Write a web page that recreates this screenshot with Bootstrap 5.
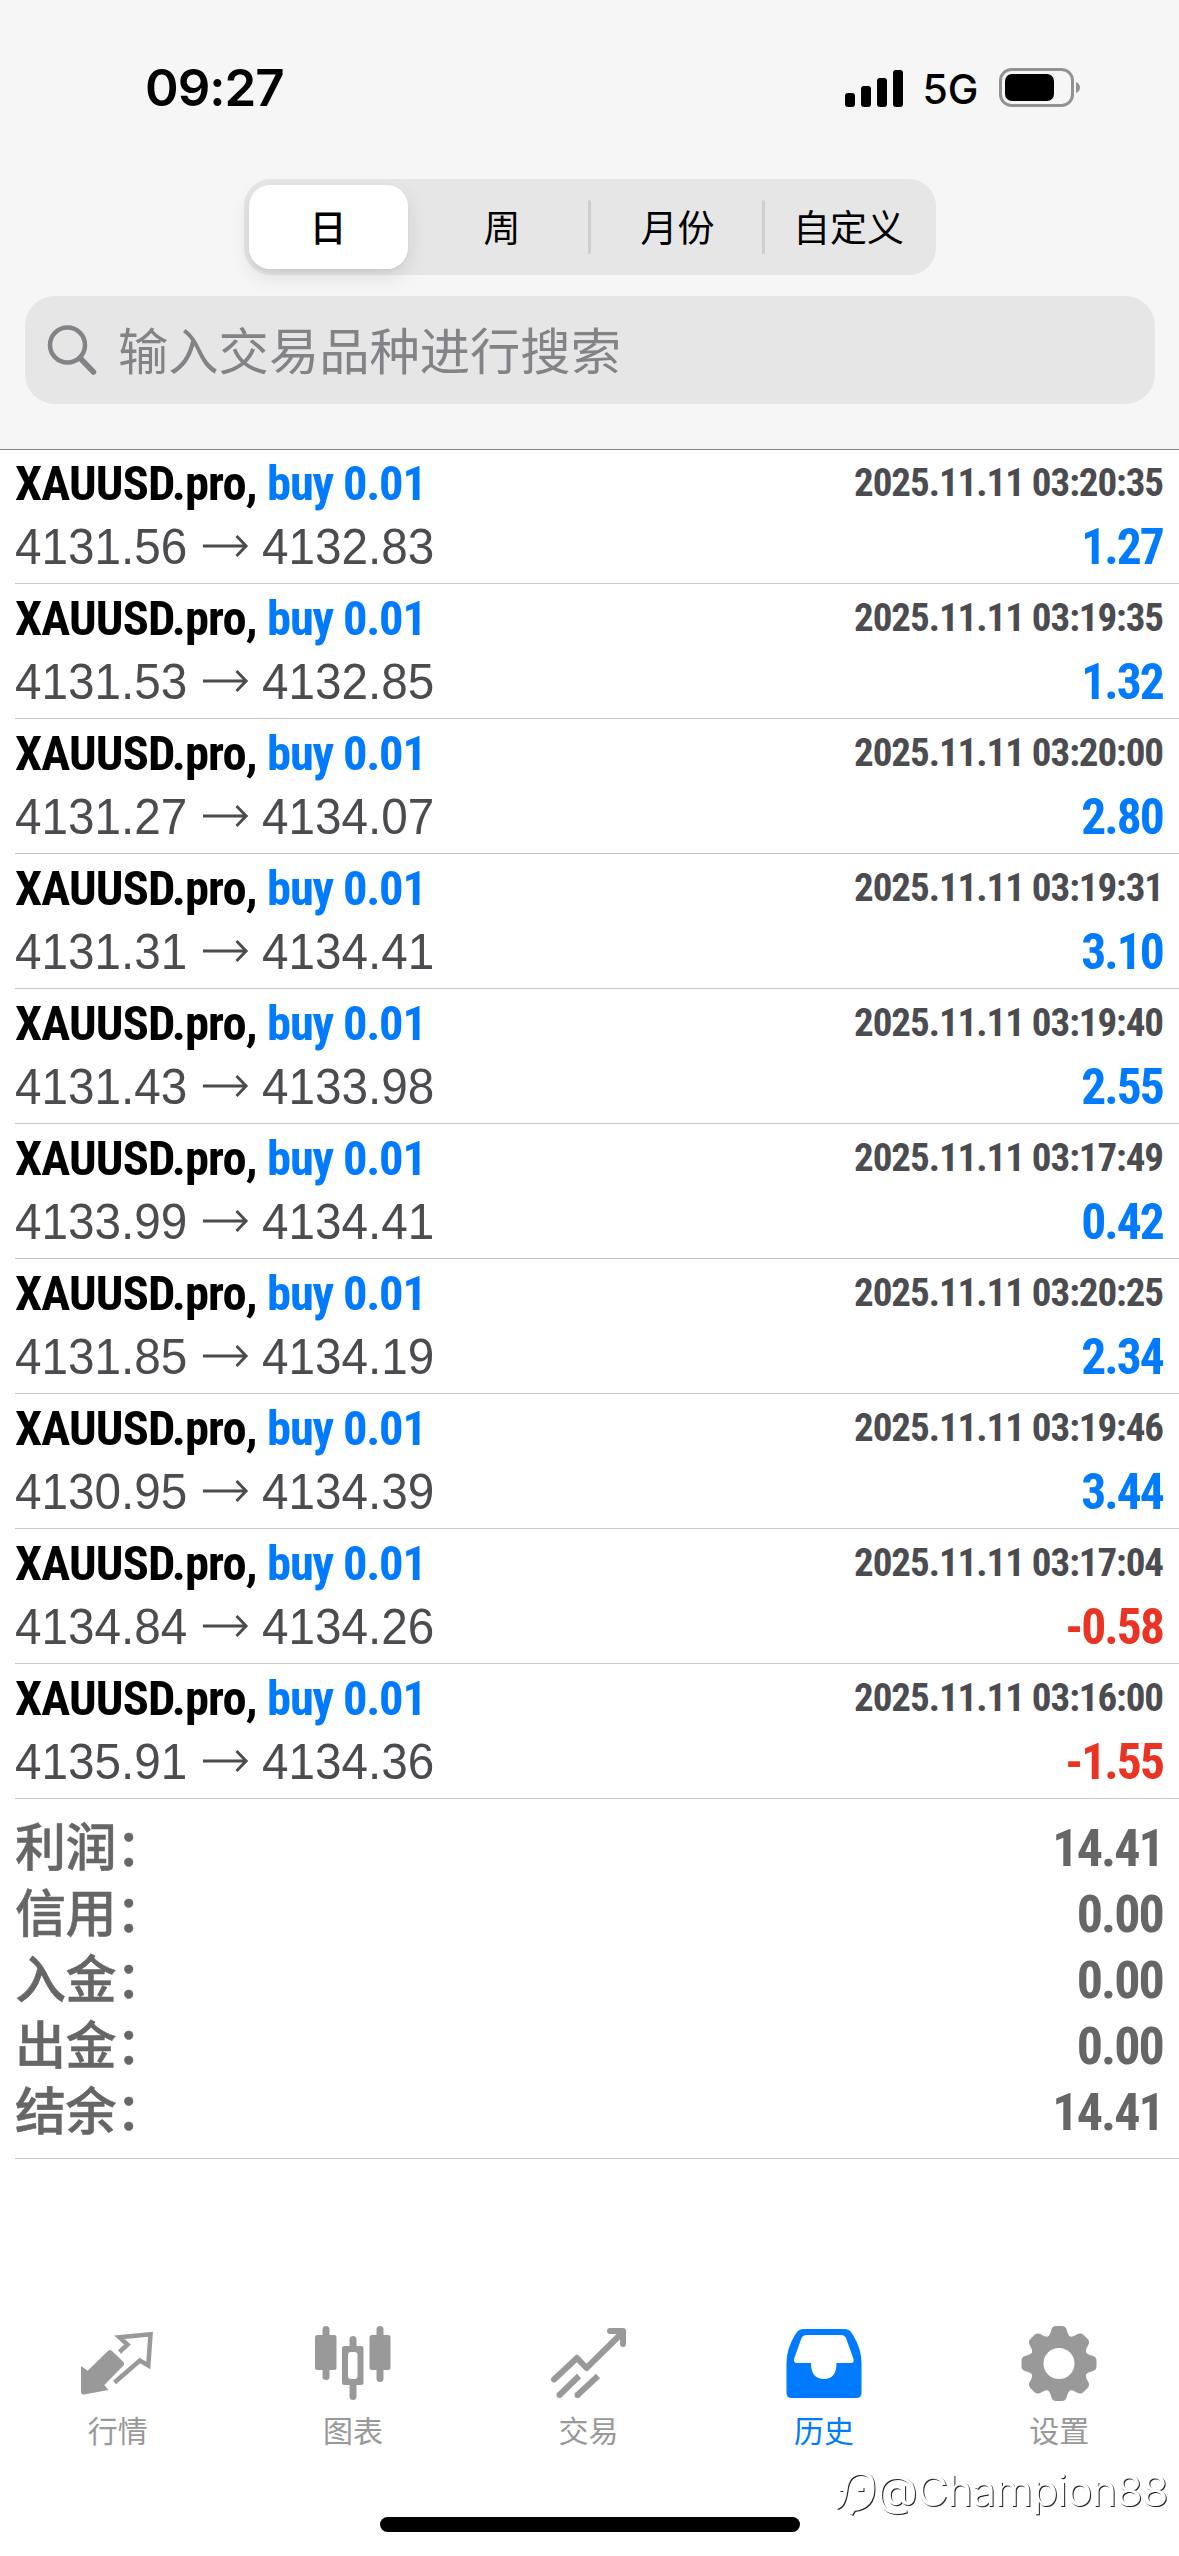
<!DOCTYPE html>
<html lang="zh-CN">
<head>
<meta charset="utf-8">
<title>历史</title>
<link href="https://cdn.jsdelivr.net/npm/bootstrap@5.3.0/dist/css/bootstrap.min.css" rel="stylesheet">
<style>
body{width:1179px;height:2556px;overflow:hidden;background:#fff;font-family:"Liberation Sans","Noto Sans CJK SC",sans-serif;color:#000}
.app-top{height:450px;background:#f6f6f6;border-bottom:1px solid #838388}
.status-line{height:179px;padding:58px 97px 0 145px}
.clock{font:600 51px/60px Inter,sans-serif;letter-spacing:-1px}
.net{font:500 41px/60px Inter,sans-serif;letter-spacing:-.3px;margin:1px 21px 0 19px}
.segments{width:692px;height:96px;border-radius:27px;background:#e6e6e6;padding:6px 5px;font:400 37px/82px "Noto Sans CJK SC",sans-serif}
.segments>div{flex:0 0 174px;text-align:center}
.segments>.seg-on{flex-basis:159px;background:#fff;border-radius:21px;box-shadow:0 8px 20px rgba(0,0,0,.1),0 2px 3px rgba(0,0,0,.04);margin-right:9px;font-weight:500}
.segments>.seg-line{flex:0 0 3px;height:54px;background:#cfcfd1;border-radius:2px;align-self:center}
.segments>.seg-b{flex-basis:171px}
.segments>.seg-mid{padding-left:3px}
.segments>.seg-end{padding-right:3px}
.search-box{margin:21px 24px 0 25px;height:108px;border-radius:30px;background:#e6e6e7;color:#838387;font:400 50.3px/105px "Noto Sans CJK SC",sans-serif;padding-left:22px}
.search-hint{margin-left:21px;height:108px}
.deals{margin-top:-1px}
.deal{height:135px;margin-left:15px;padding:1px 16px 0 0;border-bottom:1px solid #c6c6c8}
.cond{font-family:Roboto,sans-serif;font-stretch:75%;font-weight:700;white-space:nowrap}
.deal-name{font-size:48.5px;line-height:67px;letter-spacing:-.85px}
.deal-name .c-blue{letter-spacing:-1.2px}
.deal-time{font-size:39px;line-height:66px;color:#4b4b50;letter-spacing:-1.05px}
.price{font-size:49.5px;line-height:60px;color:#4b4b50;display:inline-block;transform:scaleX(.963);transform-origin:0 50%;white-space:nowrap}
.price svg{margin:-9px 0 0 2px}
.gain{font-size:49.5px;line-height:60px;letter-spacing:-1.9px}
.c-blue{color:#007aff}.c-red{color:#eb3323}
.totals{margin-left:15px;height:360px;border-bottom:1px solid #c6c6c8;padding:16px 16px 0 0;color:#666}
.totals>div{height:66px}
.tot-k{font:500 51px/59px "Noto Sans CJK SC",sans-serif;letter-spacing:-.5px;-webkit-text-stroke:.5px #666}
.tot-v{font-size:52px;line-height:67px;letter-spacing:-1.9px}
.tabs{margin-top:167px;height:230px;padding-right:2px;color:#999;font:400 30px/40px "Noto Sans CJK SC",sans-serif}
.tabs>div{flex:1 1 0}
.tabs svg{display:block;margin:0 auto 3px}
.home-bar{left:380px;top:2517px;width:420px;height:15px;border-radius:8px;background:#000}
.sig{left:833px;top:2460px;color:#fff;filter:drop-shadow(1px 1px 0 #222);font:400 43px/60px Inter,sans-serif;letter-spacing:-.9px}
</style>
</head>
<body class="position-relative">
<header class="app-top">
  <div class="status-line d-flex align-items-start justify-content-between">
    <div class="clock">09:27</div>
    <div class="d-flex align-items-start">
      <svg class="mt-2 pt-1" width="59" height="50" viewBox="0 1 59 46"><rect y="24" width="10" height="14" rx="3"/><rect x="16" y="17" width="10" height="21" rx="3"/><rect x="32" y="9" width="10" height="29" rx="3"/><rect x="48" y="1" width="10" height="37" rx="3"/></svg>
      <div class="net">5G</div>
      <svg class="mt-2" width="83" height="46" viewBox="0 0 83 46"><rect x="1.5" y="3.500" width="72" height="36" rx="11" fill="none" stroke="#929292" stroke-width="3"/><rect x="6" y="8" width="49" height="27" rx="7"/><path d="M77 16q4 2 4 5.500t-4 5.500z" fill="#929292"/></svg>
    </div>
  </div>
  <div class="segments d-flex mx-auto">
    <div class="seg-on">日</div><div class="seg-b">周</div><div class="seg-line"></div><div class="seg-b seg-mid">月份</div><div class="seg-line"></div><div class="seg-b seg-end">自定义</div>
  </div>
  <div class="search-box d-flex align-items-center">
    <svg width="50" height="52" viewBox="0 0 50 52" fill="none" stroke="#838387" stroke-width="4.500" stroke-linecap="round"><circle cx="20.500" cy="21" r="17.500"/><path d="M33.500 34.500L46.500 48" stroke-width="5.500"/></svg>
    <div class="search-hint">输入交易品种进行搜索</div>
  </div>
</header>
<main>
  <div class="deals" id="deals"></div>
  <div class="totals" id="totals"></div>
</main>
<nav class="tabs d-flex text-center">
  <div><svg width="80" height="80" viewBox="0 0 80 80"><path d="M3 40L9.700 44.700L30 25Q32 23 34 25L45.500 36Q47 37.500 45.500 39.500L26.300 59L30.500 64L6 68.500Q3 69 3 66z" fill="#999"/><path d="M41.500 26L49.500 18.500L41.500 11.300L72.500 8.300L70.300 39.500L61.800 34.500L36.500 56.500" fill="none" stroke="#999" stroke-width="4.500"/></svg>行情</div>
  <div><svg width="80" height="80" viewBox="0 0 80 80" fill="#999"><rect x="2" y="9" width="21.500" height="35" rx="2.500"/><rect x="9.500" y="0" width="7" height="54" rx="3.500"/><rect x="56.500" y="9" width="21" height="35" rx="2.500"/><rect x="63.500" y="0" width="7" height="56" rx="3.500"/><rect x="36.500" y="10" width="7" height="64" rx="3.500"/><rect x="29" y="20" width="21.500" height="39" rx="2.500"/><rect x="35" y="26" width="9.500" height="27" rx="3" fill="#fff"/></svg>图表</div>
  <div><svg width="80" height="80" viewBox="0 0 80 80" fill="none" stroke="#999" stroke-width="6"><path d="M5 53.500L28 32L37.500 42L74 6" stroke-linecap="round" stroke-linejoin="round"/><path d="M61 5H74V18" stroke-linecap="round" stroke-linejoin="round"/><path d="M10.500 69L30 50M28.500 69L49 50"/><path d="M10.500 69h.1M28.500 69h.1" stroke-linecap="round"/></svg>交易</div>
  <div class="c-blue"><svg width="80" height="80" viewBox="0 0 80 80"><path fill="#007aff" fill-rule="evenodd" d="M19 3H61Q66 3 69 9Q77.500 23 77.500 37V67Q77.500 72 72 72H8Q2.500 72 2.500 67V37Q2.500 23 11 9Q14 3 19 3zM23 9Q19 9 17.500 12L10 33Q9.500 37 13 37H27Q27 53 40 53Q52.500 53 52.500 37H67Q70.500 37 69.500 33L62 12Q60.500 9 57 9z"/></svg>历史</div>
  <div><svg id="gear" width="80" height="80" viewBox="0 0 80 80"></svg>设置</div>
</nav>
<div class="home-bar position-absolute"></div>
<div class="sig position-absolute d-flex align-items-center"><svg width="43" height="52" viewBox="0 0 42 52" fill="none" stroke="#fff" stroke-width="4"><path d="M3 43Q10 42 12 26Q14 9 27 9Q39 9 39 24Q39 43 20 45L17 50M6 25H14M24 25H30"/></svg><span>@Champion88</span></div>
<script src="https://cdn.jsdelivr.net/npm/bootstrap@5.3.0/dist/js/bootstrap.bundle.min.js"></script>
<script>
const deals=[["4131.56","4132.83","03:20:35","1.27"],["4131.53","4132.85","03:19:35","1.32"],["4131.27","4134.07","03:20:00","2.80"],["4131.31","4134.41","03:19:31","3.10"],["4131.43","4133.98","03:19:40","2.55"],["4133.99","4134.41","03:17:49","0.42"],["4131.85","4134.19","03:20:25","2.34"],["4130.95","4134.39","03:19:46","3.44"],["4134.84","4134.26","03:17:04","-0.58"],["4135.91","4134.36","03:16:00","-1.55"]];
document.getElementById('deals').innerHTML=deals.map(([a,b,t,g])=>`<div class="deal"><div class="d-flex justify-content-between"><span class="cond deal-name">XAUUSD.pro, <span class="c-blue">buy 0.01</span></span><span class="cond deal-time">2025.11.11 ${t}</span></div><div class="d-flex justify-content-between"><span class="price">${a} <svg width="48" height="26" viewBox="0 0 48 26" fill="none" stroke="#4b4b50" stroke-width="3"><path d="M0 13H45M35 3L45 13L35 23"/></svg> ${b}</span><span class="cond gain ${g[0]=='-'?'c-red':'c-blue'}">${g}</span></div></div>`).join('');
document.getElementById('totals').innerHTML=[["利润","14.41"],["信用","0.00"],["入金","0.00"],["出金","0.00"],["结余","14.41"]].map(([k,v])=>`<div class="d-flex justify-content-between"><span class="tot-k">${k}：</span><span class="cond tot-v">${v}</span></div>`).join('');
let teeth='';for(let i=0;i<8;i++)teeth+=`<path transform="rotate(${i*45} 40 37.500)" d="M27 12Q31 10 32 5Q33 0 37 0H43Q47 0 48 5Q49 10 53 12L48 22H32z"/>`;
document.getElementById('gear').innerHTML='<g fill="#999">'+teeth+'<circle cx="40" cy="37.500" r="28"/></g><circle cx="40" cy="37.500" r="15.500" fill="#fff"/>';
</script>
</body>
</html>
